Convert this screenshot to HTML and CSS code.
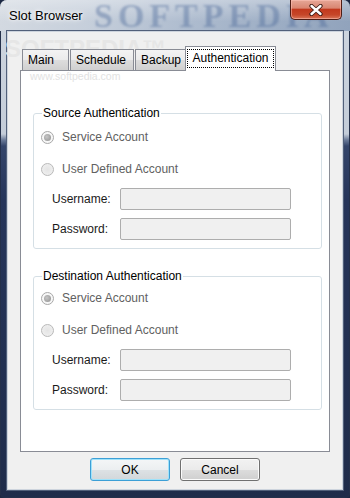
FILE: index.html
```html
<!DOCTYPE html>
<html>
<head>
<meta charset="utf-8">
<title>Slot Browser</title>
<link rel="stylesheet" href="styles.css">
</head>
<body>
<div class="window">
  <div class="titlebar">
    <span class="wm-title">SOFTPEDIA</span>
    <span class="title">Slot Browser</span>
    <button class="close" type="button" aria-label="Close">
      <svg width="16" height="12" viewBox="0 0 16 12">
        <path d="M3.5 2 L12.5 10 M12.5 2 L3.5 10" stroke="#3b1a14" stroke-width="4.2" stroke-linecap="round" fill="none"/>
        <path d="M3.5 2 L12.5 10 M12.5 2 L3.5 10" stroke="#ffffff" stroke-width="2.4" stroke-linecap="round" fill="none"/>
      </svg>
    </button>
  </div>
  <div class="client">
    <span class="wm-client">SOFTPEDIA&trade;</span>
    <div class="tabs">
      <div class="tab tab-main">Main</div>
      <div class="tab tab-schedule">Schedule</div>
      <div class="tab tab-backup">Backup</div>
      <div class="tab active"><span class="focus">Authentication</span></div>
    </div>
    <div class="panel">
      <span class="wm-url">www.softpedia.com</span>
      <fieldset class="group g1">
        <legend>Source Authentication</legend>
        <div class="group-body">
          <div class="opt"><span class="radio checked"></span><span>Service Account</span></div>
          <div class="opt"><span class="radio"></span><span>User Defined Account</span></div>
          <div class="field"><label>Username:</label><span class="input"></span></div>
          <div class="field"><label>Password:</label><span class="input"></span></div>
        </div>
      </fieldset>
      <fieldset class="group g2">
        <legend>Destination Authentication</legend>
        <div class="group-body">
          <div class="opt"><span class="radio checked"></span><span>Service Account</span></div>
          <div class="opt"><span class="radio"></span><span>User Defined Account</span></div>
          <div class="field"><label>Username:</label><span class="input"></span></div>
          <div class="field"><label>Password:</label><span class="input"></span></div>
        </div>
      </fieldset>
    </div>
    <div class="buttons">
      <button class="btn default" type="button">OK</button>
      <button class="btn" type="button">Cancel</button>
    </div>
  </div>
</div>
</body>
</html>
```
FILE: styles.css
```css
* { box-sizing: border-box; }
html, body { margin: 0; padding: 0; }
body {
  width: 350px;
  height: 498px;
  overflow: hidden;
  background: #1d2944;
  font-family: "Liberation Sans", Arial, sans-serif;
  font-size: 12px;
  color: #000;
}
.window {
  width: 350px;
  height: 498px;
  display: flex;
  flex-direction: column;
  border-radius: 7px 7px 5px 5px;
  overflow: hidden;
  box-shadow: inset 0 0 0 1px #24304a;
  background: linear-gradient(180deg, #cfd6df 0, #c4cdd9 134px, #6a7a98 140px, #34456a 146px, #26355a 200px, #1f2c4a 100%);
}
.titlebar {
  height: 31px;
  flex: none;
  display: flex;
  align-items: flex-start;
  position: relative;
  overflow: hidden;
  background:
    linear-gradient(180deg, rgba(255,255,255,0.35), rgba(255,255,255,0) 70%),
    linear-gradient(90deg, #d3d9e1 0, #c6cfdb 25%, #adbbce 55%, #9cadc4 80%, #91a3bc 100%);
}
.wm-title {
  position: absolute;
  left: 94px;
  top: 0;
  font: bold 34px "Liberation Serif", serif;
  line-height: 31px;
  letter-spacing: 5px;
  color: rgba(70, 100, 150, 0.4);
  filter: blur(1px);
}
.title {
  position: relative;
  padding: 8px 0 0 9px;
  font-size: 13px;
  line-height: 15px;
  color: #000;
  text-shadow: 0 0 6px #fff, 0 0 3px rgba(255,255,255,0.9);
}
.close {
  position: relative;
  margin-left: auto;
  margin-right: 8px;
  width: 52px;
  height: 20px;
  padding: 0;
  border: 1px solid #4f1d15;
  border-top: none;
  border-radius: 0 0 5px 5px;
  background: linear-gradient(180deg, #e6a797 0, #d98672 42%, #c2391e 50%, #c64629 78%, #d97659 100%);
  box-shadow: inset 0 0 0 1px rgba(255, 200, 190, 0.5);
  display: flex;
  align-items: center;
  justify-content: center;
}
.close svg { display: block; }
.client {
  flex: 1;
  position: relative;
  margin: 0 7px 8px;
  padding: 14px 12px 0;
  background: #f0f0f0;
  border: 1px solid #cdd4dd;
  box-shadow: 0 0 0 1px #52607a;
}
.wm-client {
  position: absolute;
  left: -3px;
  top: 11px;
  font: bold 24px "Liberation Sans", Arial, sans-serif;
  line-height: 12px;
  color: #e6e6e6;
}
.tabs {
  position: relative;
  display: flex;
  align-items: flex-end;
  height: 24px;
  padding-left: 2px;
}
.tab {
  height: 21px;
  margin-right: 1px;
  padding-left: 5px;
  line-height: 20px;
  border: 1px solid #898c95;
  border-bottom: none;
  background: linear-gradient(180deg, #f3f3f3 0, #ebebeb 50%, #dddddd 50%, #d0d0d0 100%);
  white-space: nowrap;
}
.tab-main { width: 47px; }
.tab-schedule { width: 64px; }
.tab-backup { width: 52px; }
.tab.active {
  position: relative;
  z-index: 1;
  width: 91px;
  height: 25px;
  margin: 0 0 -1px -3px;
  padding: 2px 0 0;
  background: #fff;
  display: flex;
  justify-content: center;
  align-items: flex-start;
}
.focus {
  padding: 1px 4px;
  line-height: 15px;
  border: 1px dotted #000;
}
.panel {
  position: relative;
  height: 382px;
  padding: 35px 7px 0 12px;
  background: #fff;
  border: 1px solid #898c95;
}
.wm-url {
  position: absolute;
  left: 9px;
  top: 0;
  font-size: 10.5px;
  line-height: 11px;
  color: #e2e2e2;
}
.group {
  margin: 0;
  padding: 0;
  min-width: 0;
  border: 1px solid #d5dfe5;
  border-radius: 3px;
}
.group legend {
  margin-left: 8px;
  padding: 0 1px;
  font-size: 12px;
  line-height: 14px;
  color: #000;
}
.g2 { margin-top: 20px; }
.group-body { padding: 9px 0 8px 7px; }
.g2 .group-body { padding-top: 7px; }
.opt {
  display: flex;
  align-items: center;
  gap: 8px;
  height: 16px;
  color: #616161;
}
.opt + .opt { margin-top: 16px; }
.radio {
  flex: none;
  width: 13px;
  height: 13px;
  border-radius: 50%;
  border: 1px solid #b9b9b9;
  background: radial-gradient(circle at 50% 50%, #e4e4e4 0, #f2f2f2 100%);
  display: flex;
  align-items: center;
  justify-content: center;
}
.radio.checked {
  background: #f7f7f7;
  border-color: #a9a9a9;
}
.radio.checked::after {
  content: "";
  width: 7px;
  height: 7px;
  border-radius: 50%;
  background: radial-gradient(circle at 40% 40%, #c6c6c6 0, #8f8f8f 100%);
}
.field {
  display: flex;
  align-items: center;
  margin-top: 8px;
}
.opt + .field { margin-top: 11px; }
.field label {
  width: 68px;
  margin-left: 11px;
  color: #1a1a1a;
}
.input {
  display: block;
  width: 171px;
  height: 22px;
  border: 1px solid #adadad;
  border-radius: 2px;
  background: #f0f0f0;
}
.buttons {
  display: flex;
  justify-content: center;
  gap: 10px;
  margin-top: 6px;
}
.btn {
  width: 80px;
  height: 23px;
  padding: 0;
  border: 1px solid #707070;
  border-radius: 3px;
  background: linear-gradient(180deg, #f2f2f2 0, #ebebeb 50%, #dddddd 50%, #cfcfcf 100%);
  box-shadow: inset 0 0 0 1px #fbfbfb;
  font-family: "Liberation Sans", Arial, sans-serif;
  font-size: 12px;
  color: #000;
}
.btn.default {
  border-color: #3c9fd6;
  box-shadow: inset 0 0 0 1px #9fe2fa;
  background: linear-gradient(180deg, #f4f6f7 0, #eceff1 50%, #dde2e5 50%, #d2d7da 100%);
}
```
